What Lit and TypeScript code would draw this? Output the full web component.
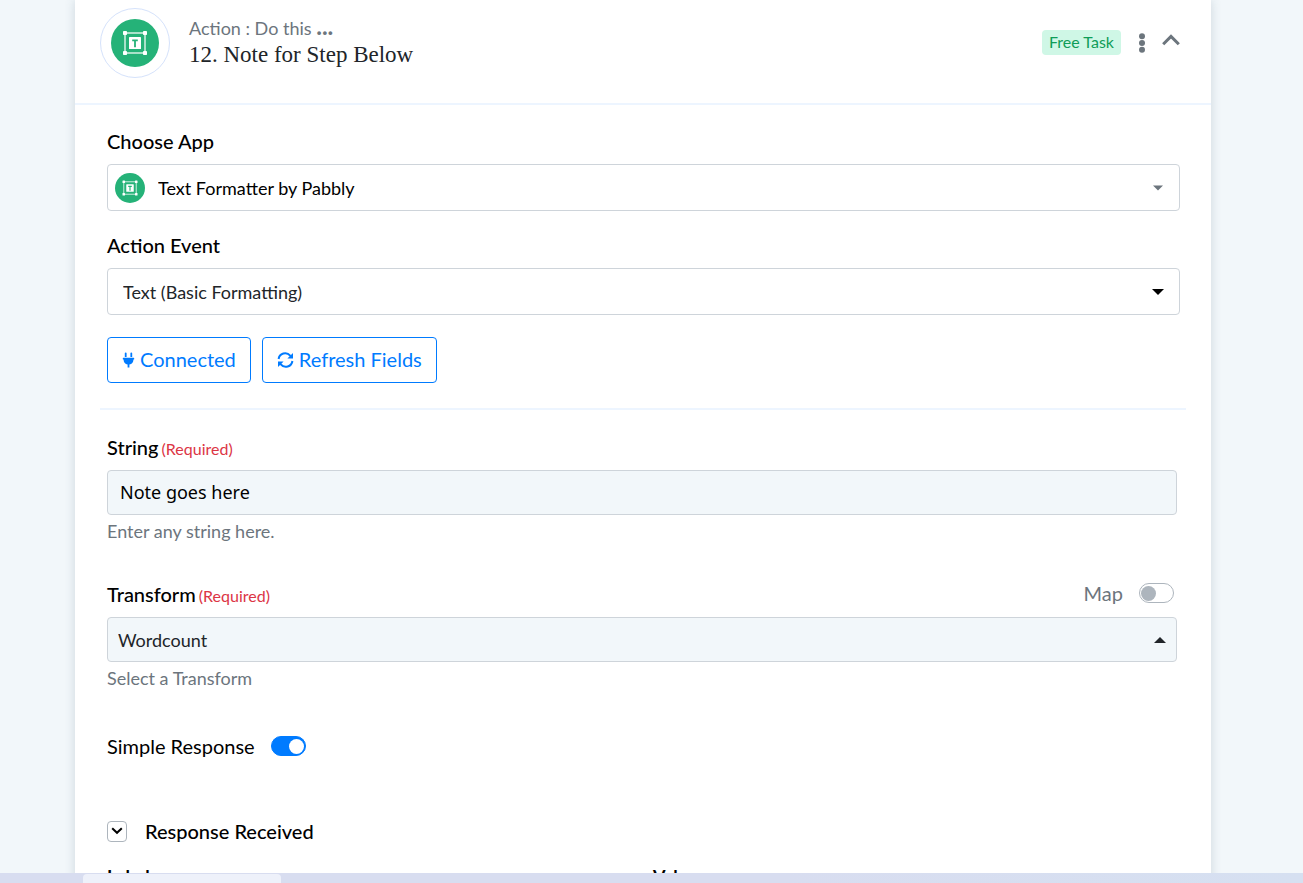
import { LitElement, html, css, svg } from "lit";
import { customElement, property, state } from "lit/decorators.js";

@customElement("formatter-icon")
class FormatterIcon extends LitElement {
  static styles = css`
    :host {
      display: block;
      width: 48px;
      height: 48px;
    }
    :host([small]) {
      width: 30px;
      height: 30px;
    }
    svg {
      display: block;
      width: 100%;
      height: 100%;
    }
  `;

  render() {
    const corners = [
      [12, 12],
      [32, 12],
      [12, 32],
      [32, 32],
    ];
    return html`
      <svg viewBox="0 0 48 48" aria-hidden="true">
        <circle cx="24" cy="24" r="24" fill="#25b278" />
        <rect x="14" y="14" width="20" height="20" fill="none" stroke="#b8e6d2" stroke-width="1.8" />
        ${corners.map(
          ([x, y]) => svg`<rect x=${x} y=${y} width="4" height="4" rx="0.8" fill="#fff" />`
        )}
        <rect x="18" y="18" width="12" height="12" rx="0.6" fill="#fff" />
        <path d="M21.2 21.3h5.6M24 21.3v6.9" fill="none" stroke="#25b278" stroke-width="1.8" />
      </svg>
    `;
  }
}

@customElement("toggle-switch")
class ToggleSwitch extends LitElement {
  @property({ type: Boolean }) checked = false;
  @property() label = "";

  static styles = css`
    :host {
      display: block;
      font-size: 20px;
      line-height: 22px;
    }
    label {
      display: flex;
      align-items: center;
      gap: 16px;
      cursor: pointer;
    }
    input {
      appearance: none;
      box-sizing: border-box;
      display: flex;
      align-items: center;
      width: 35px;
      height: 20px;
      margin: 0;
      padding: 0 1px;
      border: 1px solid #adb5bd;
      border-radius: 10px;
      background: #fff;
      cursor: pointer;
    }
    input::before {
      content: "";
      width: 15px;
      height: 15px;
      border-radius: 50%;
      background: #adb5bd;
    }
    input:checked {
      justify-content: flex-end;
      border-color: #007bff;
      background: #007bff;
    }
    input:checked::before {
      background: #fff;
    }
  `;

  render() {
    return html`
      <label>
        <span>${this.label}</span>
        <input
          type="checkbox"
          role="switch"
          .checked=${this.checked}
          @change=${(e: Event) => (this.checked = (e.target as HTMLInputElement).checked)}
        />
      </label>
    `;
  }
}

@customElement("app-root")
class AppRoot extends LitElement {
  @state() private open = true;

  static styles = css`
    :host {
      display: flex;
      flex-direction: column;
      height: 100vh;
      overflow: hidden;
      background: #f2f7fa;
      color: #000;
      font-family: Lato, "Open Sans", sans-serif;
      font-size: 18px;
      line-height: 24px;
    }
    * {
      box-sizing: border-box;
    }
    button,
    input,
    select {
      font: inherit;
      color: inherit;
    }
    svg {
      display: block;
    }
    .page {
      flex: 1;
      min-height: 0;
      overflow: hidden;
      padding: 0 92px 0 75px;
    }
    .card {
      min-height: 100%;
      background: #fff;
      box-shadow: 0 0 10px rgba(60, 90, 110, 0.2);
    }
    .head {
      display: flex;
      align-items: flex-start;
      gap: 19px;
      padding: 8px 31px 25px 25px;
      border-bottom: 2px solid #edf5ff;
    }
    .avatar {
      display: grid;
      place-items: center;
      width: 70px;
      height: 70px;
      border: 1px solid #d5e2fb;
      border-radius: 50%;
    }
    .titles {
      flex: 1;
      padding-top: 8px;
    }
    .kicker {
      margin: 0;
      color: #6c757d;
    }
    .dots {
      font-size: 24px;
      font-weight: 700;
      line-height: 0;
    }
    .title {
      margin: 0;
      color: #212529;
      font: 400 23px/30px "Liberation Serif", serif;
    }
    .tools {
      display: flex;
      align-items: center;
      padding-top: 22px;
    }
    .badge {
      padding: 0 7px 1px;
      border-radius: 4px;
      background: #cff7e6;
      color: #0f9d58;
      font-size: 16px;
      line-height: 24px;
    }
    .icon-btn {
      display: block;
      padding: 0;
      border: 0;
      background: none;
      color: #6c757d;
      cursor: pointer;
    }
    .more {
      margin: 0 17px 0 18px;
    }
    .body {
      padding: 24px 31px 0 32px;
    }
    .label {
      display: block;
      margin-bottom: 11px;
      font-size: 20px;
      font-weight: 500;
    }
    .required {
      margin-left: -2px;
      color: #dc3545;
      font-size: 16px;
      font-weight: 400;
      line-height: 1;
    }
    .field {
      margin-bottom: 22px;
    }
    .control {
      display: grid;
      align-items: center;
    }
    .control > * {
      grid-area: 1 / 1;
    }
    .control > formatter-icon,
    .control > svg {
      pointer-events: none;
    }
    .control > formatter-icon {
      margin-left: 8px;
    }
    .control > svg {
      justify-self: end;
      margin-right: 16px;
    }
    .params .control > svg {
      margin-right: 11px;
    }
    .box {
      width: 100%;
      height: 47px;
      margin: 0;
      padding: 1px 15px 0;
      border: 1px solid #ced4da;
      border-radius: 4px;
      background: #fff;
      appearance: none;
      outline: none;
    }
    .event {
      color: #212529;
    }
    .with-icon {
      padding-left: 50px;
    }
    .filled {
      height: 45px;
      padding: 0 10px;
      background: #f2f7fa;
      color: #212529;
    }
    .text-input {
      padding: 0 12px 2px;
      color: #000;
      font-family: "Noto Sans", "Open Sans", sans-serif;
    }
    .actions {
      display: flex;
      gap: 11px;
    }
    .btn {
      display: flex;
      align-items: center;
      gap: 5px;
      height: 46px;
      padding: 0 14px 2px;
      border: 1px solid #007bff;
      border-radius: 4px;
      background: #fff;
      color: #007bff;
      font-size: 20px;
      cursor: pointer;
    }
    .rule {
      height: 2px;
      margin: 25px -6px 25px -7px;
      border: 0;
      background: #edf5ff;
    }
    .params {
      padding-right: 3px;
    }
    .param {
      margin-bottom: 39px;
    }
    .param-head {
      display: flex;
      justify-content: space-between;
      padding-right: 3px;
    }
    .map {
      color: #6c757d;
    }
    .help {
      margin: 4px 0 0;
      color: #6c757d;
    }
    .simple {
      margin-top: 45px;
    }
    .received {
      display: flex;
      align-items: center;
      gap: 18px;
      margin-top: 63px;
      font-size: 20px;
      font-weight: 500;
      line-height: 22px;
    }
    .expand {
      display: grid;
      place-items: center;
      width: 20px;
      height: 21px;
      padding: 0;
      border: 1px solid #adb5bd;
      border-radius: 4px;
      background: #fff;
      cursor: pointer;
    }
    .columns {
      display: grid;
      grid-template-columns: 1fr 1fr;
      gap: 22px;
      margin-top: 23px;
      font-weight: 700;
    }
    .taskbar {
      flex: none;
      height: 10px;
      padding: 1px 83px 0;
      background: linear-gradient(90deg, #d8ddf0, #d8ddf0 60%, #d6e0f1);
    }
    .task {
      width: 198px;
      height: 9px;
      border-radius: 4px 4px 0 0;
      background: #eef1fa;
    }
  `;

  private caret(color: string, small = false) {
    return html`<svg width="12" height="6" viewBox="0 0 12 6" aria-hidden="true">
      <path d=${small ? "M1 .5h10L6 5.5z" : "M0 0h12L6 6z"} fill=${color} />
    </svg>`;
  }

  render() {
    return html`
      <main class="page">
        <section class="card">
          <header class="head">
            <div class="avatar"><formatter-icon></formatter-icon></div>
            <div class="titles">
              <p class="kicker">Action : Do this <span class="dots">...</span></p>
              <h1 class="title">12. Note for Step Below</h1>
            </div>
            <div class="tools">
              <span class="badge">Free Task</span>
              <button class="icon-btn more" aria-label="More options">
                <svg width="6" height="20" viewBox="0 0 6 20" fill="currentColor">
                  <circle cx="3" cy="3.2" r="3" />
                  <circle cx="3" cy="10" r="3" />
                  <circle cx="3" cy="16.8" r="3" />
                </svg>
              </button>
              <button class="icon-btn" aria-label="Collapse step" @click=${() => (this.open = !this.open)}>
                <svg width="18" height="18" viewBox="0 0 18 18" fill="none" stroke="currentColor" stroke-width="3">
                  <path d="M1.2 10.2 9 2.4l7.8 7.8" />
                </svg>
              </button>
            </div>
          </header>

          <form class="body" ?hidden=${!this.open} @submit=${(e: Event) => e.preventDefault()}>
            <div class="field">
              <label class="label" for="app">Choose App</label>
              <div class="control">
                <select id="app" class="box with-icon">
                  <option>Text Formatter by Pabbly</option>
                </select>
                <formatter-icon small></formatter-icon>
                ${this.caret("#6c757d", true)}
              </div>
            </div>
            <div class="field">
              <label class="label" for="event">Action Event</label>
              <div class="control">
                <select id="event" class="box event">
                  <option>Text (Basic Formatting)</option>
                </select>
                ${this.caret("#000")}
              </div>
            </div>
            <div class="actions">
              <button type="button" class="btn">
                <svg width="13" height="17" viewBox="0 0 13 17" fill="currentColor" aria-hidden="true">
                  <path d="M2.8 2.3a.9.9 0 0 1 1.8 0V6H2.8zM8.4 2.3a.9.9 0 0 1 1.8 0V6H8.4zM1.3 6.8h10.4a.5.5 0 0 1 .5.5v.7a.5.5 0 0 1-.5.5h-.3v.5a4.8 4.8 0 0 1-4 4.4v3H5.6v-3a4.8 4.8 0 0 1-4-4.4v-.5h-.3a.5.5 0 0 1-.5-.5v-.7a.5.5 0 0 1 .5-.5z" />
                </svg>
                Connected
              </button>
              <button type="button" class="btn">
                <svg width="17" height="17" viewBox="0 0 17 17" fill="none" stroke="currentColor" stroke-width="2" aria-hidden="true">
                  <path d="M1.6 8a6.6 6.6 0 0 1 11.6-3.4l.8.8M15.4 10a6.6 6.6 0 0 1-11.6 3.4l-.8-.8" />
                  <path d="M16 2v5.6h-5.6zM1 16v-5.6h5.6z" fill="currentColor" stroke="none" />
                </svg>
                Refresh Fields
              </button>
            </div>

            <hr class="rule" />

            <div class="params">
              <div class="param">
                <label class="label" for="string">String <span class="required">(Required)</span></label>
                <div class="control">
                  <input id="string" class="box filled text-input" type="text" value="Note goes here" />
                </div>
                <p class="help">Enter any string here.</p>
              </div>
              <div class="param">
                <div class="param-head">
                  <label class="label" for="transform">Transform <span class="required">(Required)</span></label>
                  <toggle-switch class="map" label="Map"></toggle-switch>
                </div>
                <div class="control">
                  <select id="transform" class="box filled">
                    <option>Wordcount</option>
                  </select>
                  <svg width="12" height="6" viewBox="0 0 12 6" aria-hidden="true">
                    <path d="M0 6h12L6 0z" fill="#212529" />
                  </svg>
                </div>
                <p class="help">Select a Transform</p>
              </div>
              <toggle-switch class="simple" label="Simple Response" checked></toggle-switch>
              <div class="received">
                <button type="button" class="expand" aria-label="Show response">
                  <svg width="12" height="8" viewBox="0 0 12 8" fill="none" stroke="#000" stroke-width="2">
                    <path d="m1.2 1.2 4.8 4.6 4.8-4.6" />
                  </svg>
                </button>
                <span>Response Received</span>
              </div>
              <div class="columns">
                <span>Label</span>
                <span>Value</span>
              </div>
            </div>
          </form>
        </section>
      </main>
      <footer class="taskbar"><div class="task"></div></footer>
    `;
  }
}
